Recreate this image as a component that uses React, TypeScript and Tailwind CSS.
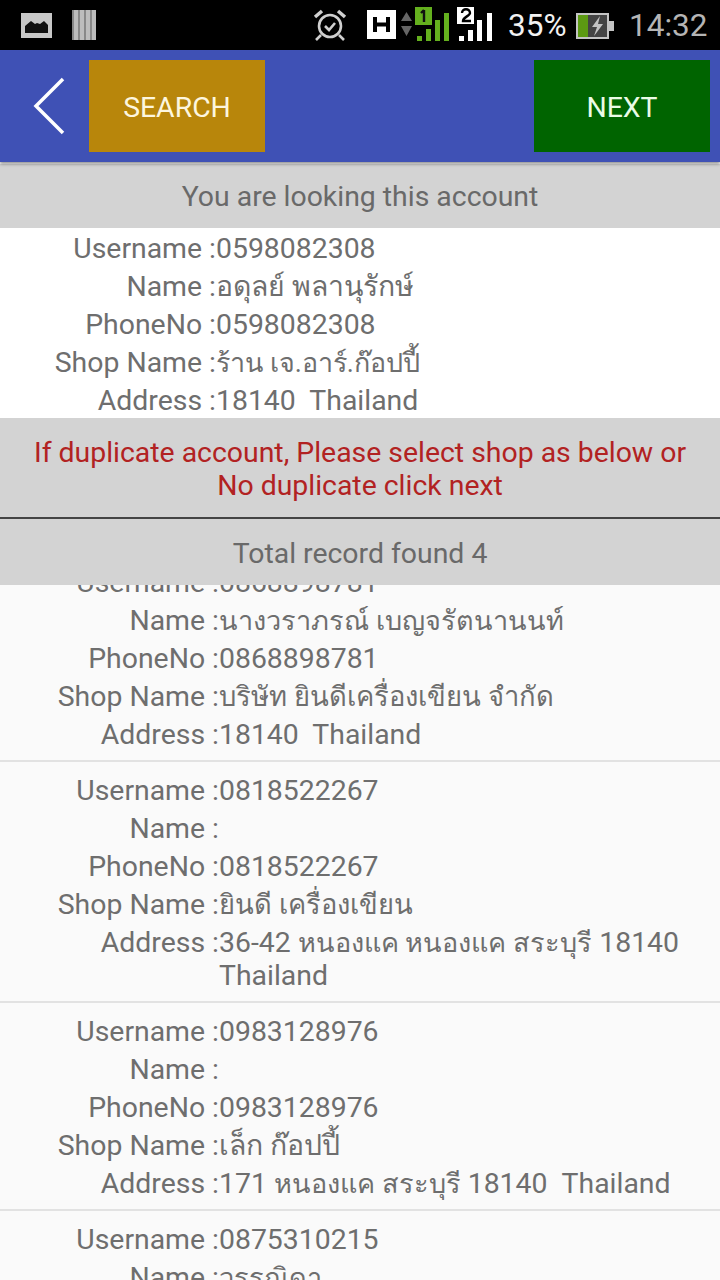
import React from 'react';

interface Account {
  username: string;
  name: React.ReactNode;
  phone: string;
  shop: React.ReactNode;
  address: React.ReactNode;
}

// thai runs sit a bit narrower than the latin text around them
function Th({ children, className = 'text-[27.1px]' }: { children: React.ReactNode; className?: string }) {
  return <span className={`leading-none ${className}`}>{children}</span>;
}

const current: Account = {
  username: '0598082308',
  name: 'อดุลย์ พลานุรักษ์',
  phone: '0598082308',
  shop: <Th className="text-[26.9px]">ร้าน เจ.อาร์.ก๊อปปี้</Th>,
  address: '18140  Thailand',
};

const records: Account[] = [
  {
    username: '0868898781',
    name: <Th>นางวราภรณ์ เบญจรัตนานนท์</Th>,
    phone: '0868898781',
    shop: <Th className="text-[27.4px]">บริษัท ยินดีเครื่องเขียน จำกัด</Th>,
    address: '18140  Thailand',
  },
  {
    username: '0818522267',
    name: '',
    phone: '0818522267',
    shop: <Th className="text-[27.3px]">ยินดี เครื่องเขียน</Th>,
    address: (
      <>
        36-42 <Th>หนองแค หนองแค สระบุรี</Th> 18140 Thailand
      </>
    ),
  },
  {
    username: '0983128976',
    name: '',
    phone: '0983128976',
    shop: 'เล็ก ก๊อปปี้',
    address: (
      <>
        171 <Th>หนองแค สระบุรี</Th> 18140  Thailand
      </>
    ),
  },
  {
    username: '0875310215',
    name: <Th>วรรณิดา</Th>,
    phone: '0875310215',
    shop: '',
    address: '',
  },
];

function Row({ label, value, wide }: { label: string; value: React.ReactNode; wide: boolean }) {
  return (
    <div className={wide ? 'grid grid-cols-[219px_1fr] pr-[30px]' : 'grid grid-cols-[216px_1fr] pr-[30px]'}>
      <div className="text-right whitespace-pre">{label} :</div>
      <div className="whitespace-pre-wrap">{value}</div>
    </div>
  );
}

function AccountRows({ account, wide }: { account: Account; wide: boolean }) {
  return (
    <div className="flex flex-col gap-[5px] text-[28.4px] leading-[33px] text-[#6e6e6e]">
      <Row label="Username" value={account.username} wide={wide} />
      <Row label="Name" value={account.name} wide={wide} />
      <Row label="PhoneNo" value={account.phone} wide={wide} />
      <Row label="Shop Name" value={account.shop} wide={wide} />
      <Row label="Address" value={account.address} wide={wide} />
    </div>
  );
}

function StatusBar() {
  return (
    <div className="h-[50px] bg-black flex items-center">
      <svg width="31" height="25" viewBox="0 0 31 25" className="ml-[21px]">
        <rect width="31" height="25" fill="#c8c8c8" />
        <path d="M4 20v-7l6-5 4 3 2-1 3 1 4-3 4 4v8z" fill="#111" />
      </svg>
      <svg width="24" height="30" viewBox="0 0 24 30" className="ml-[20px]">
        <rect width="24" height="30" fill="#bdbdbd" />
        <path d="M1 0v30M7 0v30M13 0v30M19 0v30" stroke="#666" strokeWidth="1.200" />
      </svg>
      <svg width="34" height="32" viewBox="0 0 34 32" className="ml-[217px]" fill="none" stroke="#cfcfcf">
        <circle cx="17" cy="17" r="11" strokeWidth="2.600" />
        <path d="M12 17l4 4 6-7" strokeWidth="2.600" />
        <path d="M2 8l7-6M32 8l-7-6" strokeWidth="3.500" />
        <path d="M8 26l-5 5M26 26l5 5" strokeWidth="2.600" />
      </svg>
      <svg width="125" height="50" viewBox="0 0 125 50" className="ml-[20px]">
        <rect x="0" y="10" width="29" height="29" fill="#fff" />
        <path d="M8 17v15M21 17v15M8 24.500h13" stroke="#000" strokeWidth="4" fill="none" />
        <path d="M39.500 12l5.500 9H34zM39.500 36l5.500-10H34z" fill="#666" />
        <rect x="48" y="7" width="17" height="18" fill="#64b01e" />
        <path d="M57 10v12M54 13l3-3" stroke="#111" strokeWidth="2.400" fill="none" />
        <rect x="50" y="36" width="5" height="5" fill="#64b01e" />
        <rect x="59" y="29" width="5" height="12" fill="#64b01e" />
        <rect x="68" y="20" width="5" height="21" fill="#64b01e" />
        <rect x="77" y="13" width="5" height="28" fill="#64b01e" />
        <rect x="90" y="7" width="17" height="17" fill="#fff" />
        <path d="M95 13c0-5 8-5 8 0 0 3-7 4-7 8h8" stroke="#000" strokeWidth="2.400" fill="none" />
        <rect x="92" y="36" width="5" height="5" fill="#fff" />
        <rect x="101" y="30" width="5" height="11" fill="#fff" />
        <rect x="110" y="20" width="5" height="21" fill="#fff" />
        <rect x="120" y="13" width="5" height="28" fill="#fff" />
      </svg>
      <span className="ml-[16px] w-[68px] text-[31.5px] leading-[37px] text-[#f2f2f2]">35%</span>
      <svg width="38" height="26" viewBox="0 0 38 26" className="mt-[1px]">
        <rect width="33" height="26" fill="#c4c4c4" />
        <rect x="2" y="2" width="10" height="22" fill="#5c9a12" />
        <rect x="12" y="2" width="19" height="22" fill="#444" />
        <rect x="33" y="8" width="5" height="10" fill="#c4c4c4" />
        <path d="M24 3l-8 11h5l-3 9 9-12h-5z" fill="#c4c4c4" />
      </svg>
      <span className="ml-[15px] text-[31.5px] leading-[37px] text-[#b5b5b5]">14:32</span>
    </div>
  );
}

function Toolbar() {
  return (
    <div className="h-[112px] bg-[#3f51b5] flex items-center justify-between pr-[10px] shadow-[0_2px_3px_rgba(0,0,0,0.4)] relative z-10">
      <div className="flex items-center">
        <svg width="34" height="60" viewBox="0 0 34 60" className="ml-[33px] mr-[22px]" fill="none" stroke="#fff" strokeWidth="3.500">
          <path d="M30 3L3 30l27 27" />
        </svg>
        <button className="w-[176px] h-[92px] pt-[5px] bg-[#b8860b] text-[#fdf6df] text-[28.4px]">SEARCH</button>
      </div>
      <button className="w-[176px] h-[92px] pt-[5px] bg-[#006400] text-[#eafbe6] text-[28.4px]">NEXT</button>
    </div>
  );
}

export default function App() {
  return (
    <div className="w-[720px] h-[1280px] overflow-hidden flex flex-col bg-[#fafafa] font-['Roboto','Noto_Sans',sans-serif]">
      <StatusBar />
      <Toolbar />
      <div className="mt-[2px] h-[64px] pt-[3px] bg-[#d3d3d3] flex items-center justify-center text-[28.4px] text-[#696969]">
        You are looking this account
      </div>
      <div className="h-[190px] pt-[4px] bg-white">
        <AccountRows account={current} wide={false} />
      </div>
      <div className="h-[99px] bg-[#d3d3d3] pt-[18px] text-center text-[28.4px] leading-[33px] text-[#b22222]">
        If duplicate account, Please select shop as below or
        <br />
        No duplicate click next
      </div>
      <div className="h-[2px] bg-[#444444]" />
      <div className="h-[66px] pt-[4px] bg-[#d3d3d3] flex items-center justify-center text-[28.4px] text-[#696969]">
        Total record found 4
      </div>
      <div className="flex-1 overflow-hidden">
        <div className="-mt-[31px]">
          {records.map((record) => (
            <div key={record.username} className="pt-[12px] pb-[9px] border-b-2 border-[#e2e2e2]">
              <AccountRows account={record} wide={true} />
            </div>
          ))}
        </div>
      </div>
    </div>
  );
}
